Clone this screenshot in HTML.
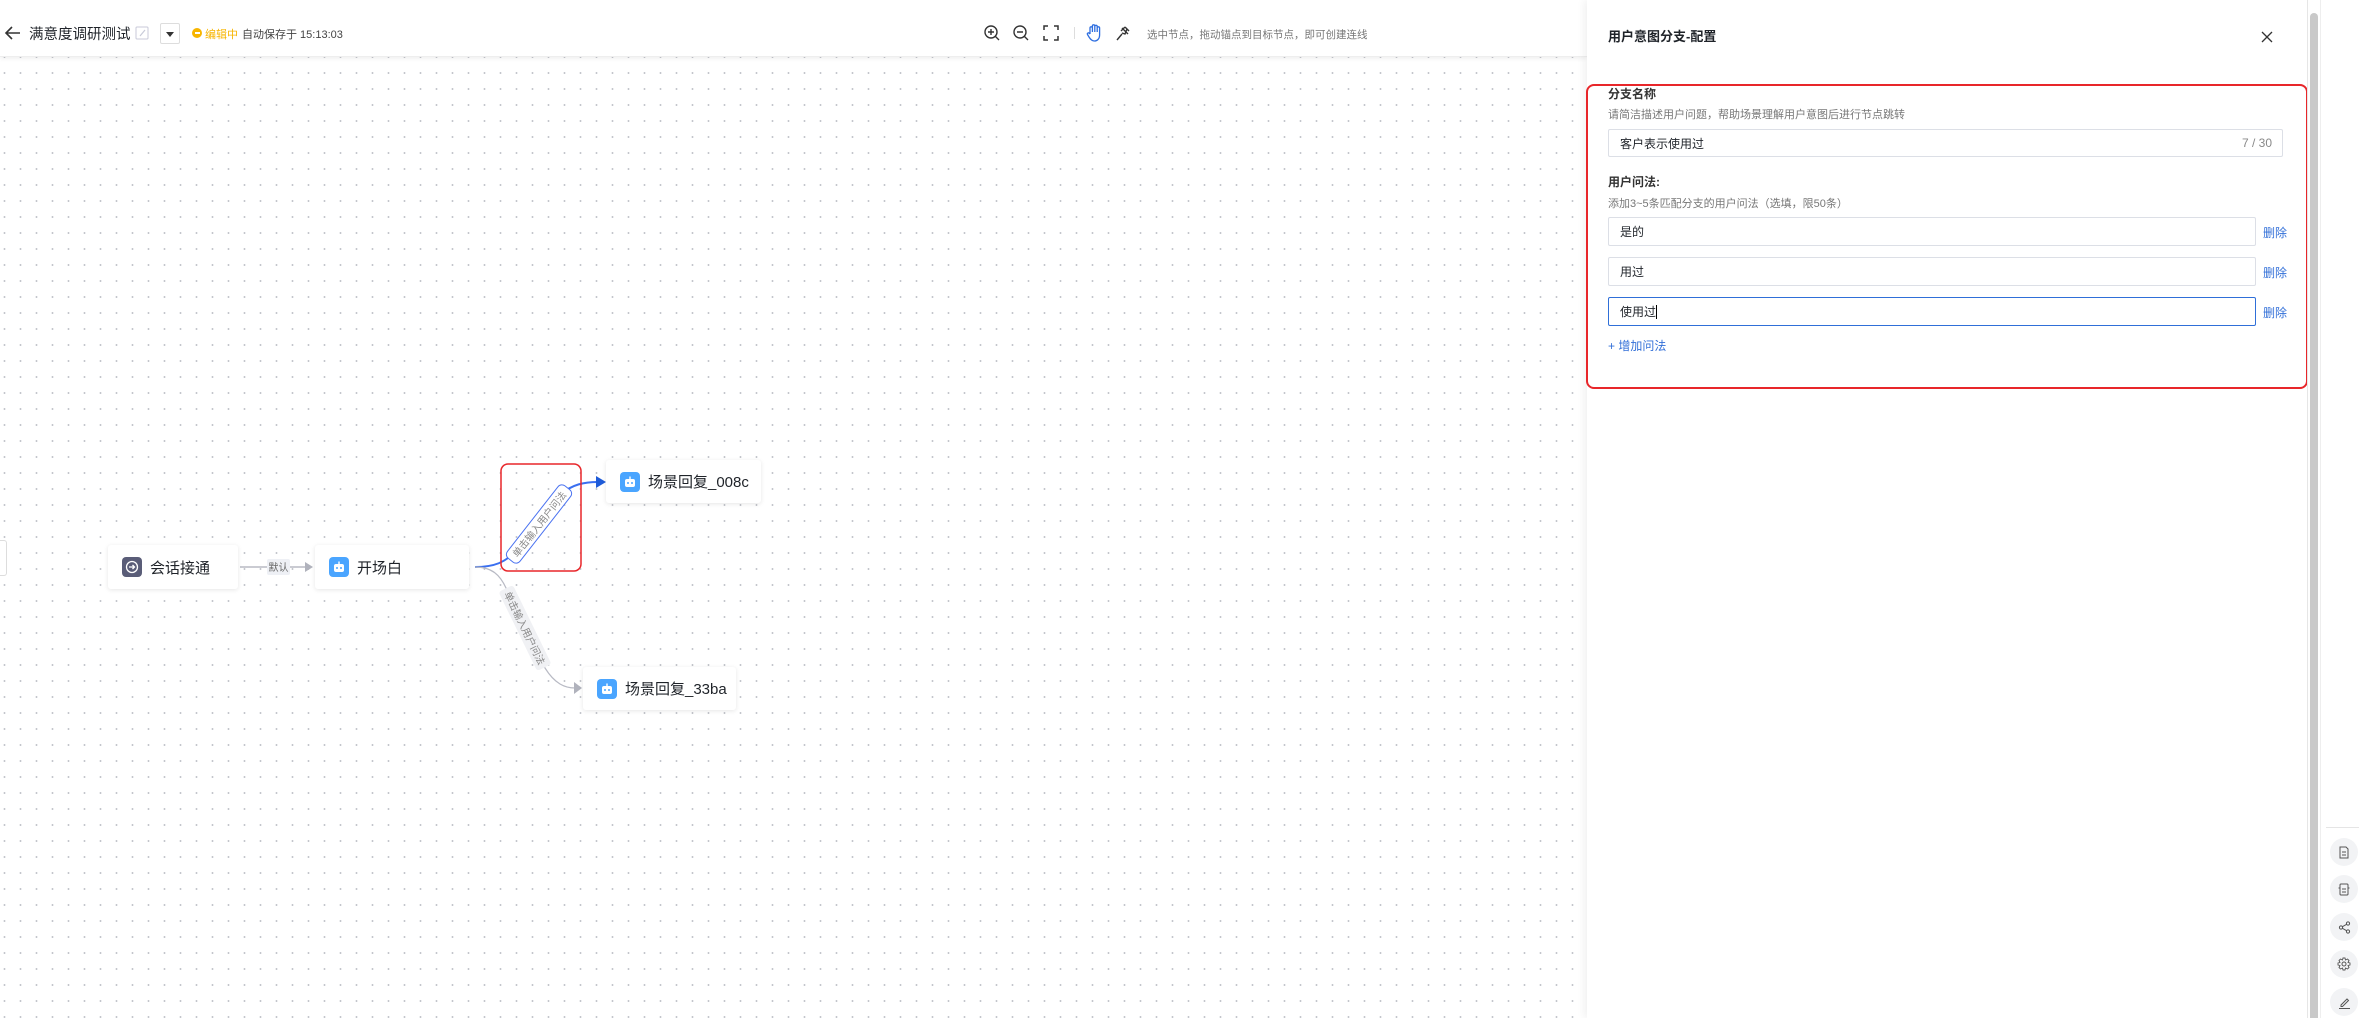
<!DOCTYPE html>
<html><head><meta charset="utf-8"><style>
*{margin:0;padding:0;box-sizing:border-box}
body{width:2359px;height:1018px;overflow:hidden;background:#fff;font-family:"Liberation Sans","Noto Sans CJK SC",sans-serif;position:relative;color:#1f2329}
.canvas{position:absolute;left:0;top:0;width:1587px;height:1018px;background-color:#fff;background-image:radial-gradient(circle,#c4c6cc 0.8px,transparent 1.1px);background-size:16px 16px;background-position:-3.5px 1px}
.header{position:absolute;left:0;top:0;width:1587px;height:57px;background:#fff;box-shadow:0 2px 4px rgba(0,0,0,.06);border-bottom:1px solid #eee}
.abs{position:absolute;white-space:nowrap}
.node{position:absolute;background:#fff;border-radius:3px;box-shadow:0 1px 5px rgba(0,0,0,.1);font-size:15px;display:flex;align-items:center}
.ic{width:20px;height:20px;border-radius:4px;margin:0 8px 0 14px;display:flex;align-items:center;justify-content:center}
.panel{position:absolute;left:1587px;top:0;width:720px;height:1018px;background:#fff;box-shadow:-3px 0 8px rgba(0,0,0,.06)}
.inp{position:absolute;border:1px solid #dcdfe6;border-radius:2px;font-size:12px;padding-left:11px;display:flex;align-items:center;color:#1f2329}
.del{position:absolute;font-size:12px;color:#3370d8}
.side{position:absolute;left:2330px;width:28px;height:28px;border-radius:50%;background:#f2f3f5;display:flex;align-items:center;justify-content:center}
</style></head><body>
<div class="canvas"></div>
<div class="abs" style="left:0;top:540px;width:7px;height:36px;border:1px solid #ddd;border-left:none;background:#fff;border-radius:0 3px 3px 0"></div>

<svg class="abs" style="left:0;top:0" width="1587" height="1018">
<line x1="240" y1="567" x2="308" y2="567" stroke="#b8bac4" stroke-width="1.5"/>
<polygon points="305,562 313,567 305,572" fill="#b0b2bc"/>
<rect x="267" y="559" width="23" height="16" rx="2" fill="#eef0f5"/>
<text x="278.5" y="571" font-size="10" fill="#666" text-anchor="middle" font-family="Liberation Sans,Noto Sans CJK SC,sans-serif">默认</text>
<path d="M475,567 C495,567 505,562 515,552 L560,495 C572,484 585,482 598,482" fill="none" stroke="#3a6ff0" stroke-width="2"/>
<polygon points="596,476 606,482 596,488" fill="#1e5bd8"/>
<g transform="translate(539,524) rotate(-52)">
<rect x="-46" y="-8" width="92" height="16" rx="5" fill="#fff" stroke="#4a72f0" stroke-width="1"/>
<text x="0" y="4" font-size="10" fill="#888" text-anchor="middle" font-family="Liberation Sans,Noto Sans CJK SC,sans-serif">单击输入用户问法</text></g>
<path d="M475,567 C492,567 500,575 506,588 L545,668 C555,684 565,688 575,688" fill="none" stroke="#b8bac4" stroke-width="1.2"/>
<polygon points="574,682 582,688 574,694" fill="#b0b2bc"/>
<g transform="translate(525,628) rotate(64)">
<rect x="-44" y="-8" width="88" height="16" rx="3" fill="#f0f1f4"/>
<text x="0" y="4" font-size="10" fill="#888" text-anchor="middle" font-family="Liberation Sans,Noto Sans CJK SC,sans-serif">单击输入用户问法</text></g>
<rect x="501" y="464" width="80" height="107" rx="7" fill="none" stroke="#e8262a" stroke-width="1.5"/>
</svg>

<div class="node" style="left:108px;top:545px;width:130px;height:44px"><div class="ic" style="background:#5a5d78"><svg width="14" height="14" viewBox="0 0 14 14"><circle cx="7" cy="7" r="5.5" fill="none" stroke="#fff" stroke-width="1.3"/><path d="M4,7H9.5M7.5,5L9.5,7L7.5,9" fill="none" stroke="#fff" stroke-width="1.3"/></svg></div>会话接通</div>
<div class="node" style="left:315px;top:545px;width:154px;height:44px"><div class="ic" style="background:#4aa5ff"><svg width="14" height="14" viewBox="0 0 14 14"><rect x="2" y="4" width="10" height="8" rx="2" fill="#fff"/><rect x="6.3" y="1.5" width="1.4" height="2.5" fill="#fff"/><circle cx="5" cy="8" r="1" fill="#4aa5ff"/><circle cx="9" cy="8" r="1" fill="#4aa5ff"/></svg></div>开场白</div>
<div class="node" style="left:606px;top:460px;width:155px;height:43px"><div class="ic" style="background:#4aa5ff"><svg width="14" height="14" viewBox="0 0 14 14"><rect x="2" y="4" width="10" height="8" rx="2" fill="#fff"/><rect x="6.3" y="1.5" width="1.4" height="2.5" fill="#fff"/><circle cx="5" cy="8" r="1" fill="#4aa5ff"/><circle cx="9" cy="8" r="1" fill="#4aa5ff"/></svg></div>场景回复_008c</div>
<div class="node" style="left:583px;top:667px;width:153px;height:43px"><div class="ic" style="background:#4aa5ff"><svg width="14" height="14" viewBox="0 0 14 14"><rect x="2" y="4" width="10" height="8" rx="2" fill="#fff"/><rect x="6.3" y="1.5" width="1.4" height="2.5" fill="#fff"/><circle cx="5" cy="8" r="1" fill="#4aa5ff"/><circle cx="9" cy="8" r="1" fill="#4aa5ff"/></svg></div>场景回复_33ba</div>

<div class="header">
<svg class="abs" style="left:4px;top:24px" width="18" height="18" viewBox="0 0 18 18"><path d="M16,9H2M8,3L2,9L8,15" fill="none" stroke="#333" stroke-width="1.6"/></svg>
<div class="abs" style="left:29px;top:23px;font-size:14.5px;color:#1f2329">满意度调研测试</div>
<svg class="abs" style="left:135px;top:26px" width="14" height="14" viewBox="0 0 14 14"><rect x="1" y="1" width="12" height="12" rx="1" fill="none" stroke="#c8cad8"/><path d="M5,10L10,4" stroke="#c8cad8" stroke-width="1.2"/></svg>
<div class="abs" style="left:160px;top:23px;width:20px;height:21px;border:1px solid #ddd;border-radius:2px"><div style="position:absolute;left:5px;top:8px;border-left:4px solid transparent;border-right:4px solid transparent;border-top:5px solid #333"></div></div>
<div class="abs" style="left:192px;top:28px;width:10px;height:10px;border-radius:50%;background:#f7b500"><div style="position:absolute;left:2.5px;top:4.3px;width:5px;height:1.4px;background:#fff"></div></div>
<div class="abs" style="left:205px;top:26px;font-size:11px;color:#f7b500">编辑中</div>
<div class="abs" style="left:242px;top:26px;font-size:11px;color:#444">自动保存于 15:13:03</div>
<svg class="abs" style="left:983px;top:24px" width="18" height="18" viewBox="0 0 18 18"><circle cx="8" cy="8" r="6" fill="none" stroke="#333" stroke-width="1.4"/><path d="M12.5,12.5L16,16M5,8H11M8,5V11" stroke="#333" stroke-width="1.4"/></svg>
<svg class="abs" style="left:1012px;top:24px" width="18" height="18" viewBox="0 0 18 18"><circle cx="8" cy="8" r="6" fill="none" stroke="#333" stroke-width="1.4"/><path d="M12.5,12.5L16,16M5,8H11" stroke="#333" stroke-width="1.4"/></svg>
<svg class="abs" style="left:1043px;top:25px" width="16" height="16" viewBox="0 0 16 16"><path d="M1,5V1H5M11,1H15V5M15,11V15H11M5,15H1V11" fill="none" stroke="#333" stroke-width="1.5"/></svg>
<div class="abs" style="left:1074px;top:27px;width:1px;height:12px;background:#ddd"></div>
<svg class="abs" style="left:1086px;top:23px" width="18" height="20" viewBox="0 0 18 20"><path d="M4,11V5a1.2,1.2 0 0 1 2.4,0V9M6.4,9V3a1.2,1.2 0 0 1 2.4,0V9M8.8,9V3.5a1.2,1.2 0 0 1 2.4,0V9M11.2,9V5a1.2,1.2 0 0 1 2.4,0V12C13.6,16 11,18 8.5,18C6,18 4.5,16.5 3,14L1.5,11.5a1.1,1.1 0 0 1 2-1L4,11" fill="none" stroke="#2f6fe0" stroke-width="1.3"/></svg>
<svg class="abs" style="left:1115px;top:24px" width="17" height="18" viewBox="0 0 17 18"><path d="M2,16L7,10M7,4L13,10M6,7L10,3M10,3L14,7M12,5L10,10L7,9" fill="none" stroke="#333" stroke-width="1.4"/></svg>
<div class="abs" style="left:1147px;top:27px;font-size:10.5px;color:#777">选中节点，拖动锚点到目标节点，即可创建连线</div>
</div>

<div class="panel">
<div class="abs" style="left:21px;top:26px;font-size:13px;font-weight:bold;color:#1f2329">用户意图分支-配置</div>
<svg class="abs" style="left:674px;top:31px" width="12" height="12" viewBox="0 0 12 12"><path d="M1,1L11,11M11,1L1,11" stroke="#333" stroke-width="1.3"/></svg>
<div class="abs" style="left:21px;top:85px;font-size:12px;font-weight:bold;color:#333">分支名称</div>
<div class="abs" style="left:21px;top:106px;font-size:11px;color:#777">请简洁描述用户问题，帮助场景理解用户意图后进行节点跳转</div>
<div class="inp" style="left:21px;top:129px;width:675px;height:28px">客户表示使用过<span style="position:absolute;right:10px;color:#888">7 / 30</span></div>
<div class="abs" style="left:21px;top:173px;font-size:12px;font-weight:bold;color:#333">用户问法:</div>
<div class="abs" style="left:21px;top:195px;font-size:11px;color:#777">添加3~5条匹配分支的用户问法（选填，限50条）</div>
<div class="inp" style="left:21px;top:217px;width:648px;height:29px">是的</div><div class="del" style="left:676px;top:224px">删除</div>
<div class="inp" style="left:21px;top:257px;width:648px;height:29px">用过</div><div class="del" style="left:676px;top:264px">删除</div>
<div class="inp" style="left:21px;top:297px;width:648px;height:29px;border-color:#2f6fd8">使用过<span style="display:inline-block;width:1px;height:14px;background:#000"></span></div><div class="del" style="left:676px;top:304px">删除</div>
<div class="abs" style="left:21px;top:337px;font-size:12px;color:#3370d8">+ 增加问法</div>
</div>
<div class="abs" style="left:1586px;top:84px;width:722px;height:305px;border:2px solid #e8262a;border-radius:8px"></div>

<div class="abs" style="left:2307px;top:0;width:1px;height:1018px;background:#e6e6e6"></div>
<div class="abs" style="left:2310px;top:13px;width:8px;height:1005px;background:#c9c9c9;border-radius:4px 4px 0 0"></div>
<div class="abs" style="left:2320px;top:0;width:1px;height:1018px;background:#eee"></div>
<div class="abs" style="left:2326px;top:827px;width:33px;height:1px;background:#e5e5e5"></div>
<div class="side" style="top:838px"><svg width="12" height="13" viewBox="0 0 12 13"><path d="M2,1H8L10,3V12H2Z M4,6H8M4,9H8" fill="none" stroke="#555" stroke-width="1"/></svg></div>
<div class="side" style="top:875px"><svg width="12" height="13" viewBox="0 0 12 13"><rect x="2" y="1" width="8" height="11" rx="1" fill="none" stroke="#555"/><path d="M4,6H8M4,9H8M0.5,5H2M10,5H11.5" stroke="#555"/></svg></div>
<div class="side" style="top:913px"><svg width="13" height="13" viewBox="0 0 13 13"><circle cx="3" cy="6.5" r="1.6" fill="none" stroke="#555"/><circle cx="10" cy="2.5" r="1.6" fill="none" stroke="#555"/><circle cx="10" cy="10.5" r="1.6" fill="none" stroke="#555"/><path d="M4.4,5.7L8.6,3.3M4.4,7.3L8.6,9.7" stroke="#555"/></svg></div>
<div class="side" style="top:950px"><svg width="14" height="14" viewBox="0 0 14 14"><circle cx="7" cy="7" r="2" fill="none" stroke="#555"/><path d="M6,1H8L8.5,3L10.5,2L12,3.5L11,5.5L13,6V8L11,8.5L12,10.5L10.5,12L8.5,11L8,13H6L5.5,11L3.5,12L2,10.5L3,8.5L1,8V6L3,5.5L2,3.5L3.5,2L5.5,3Z" fill="none" stroke="#555" stroke-width="0.9"/></svg></div>
<div class="side" style="top:988px"><svg width="13" height="13" viewBox="0 0 13 13"><path d="M3,9L9,3L10.5,4.5L4.5,10.5H3Z M1,12.5H12" fill="none" stroke="#555"/></svg></div>
</body></html>
